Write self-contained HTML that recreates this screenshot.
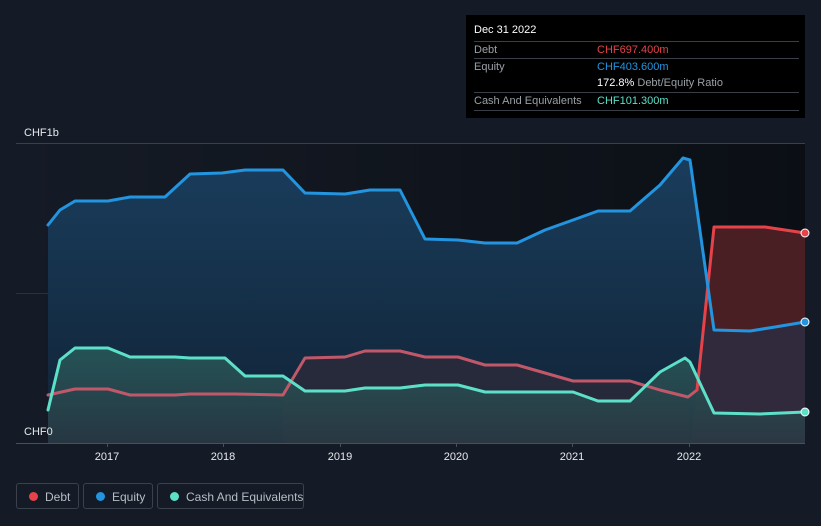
<!DOCTYPE html>
<html><head><style>
body{margin:0;background:#151b26;font-family:"Liberation Sans",sans-serif;}
.wrap{position:relative;width:821px;height:526px;overflow:hidden;background:#151b26;}
.tip{position:absolute;left:466px;top:15px;width:339px;height:103px;background:#000;color:#fff;font-size:11px;}
.tip .r{position:absolute;left:8px;right:6px;border-top:1px solid #3a3f47;height:17px;line-height:17px;color:#9aa0a6;white-space:nowrap;}
.leg{position:absolute;top:483px;height:26px;border:1px solid #3b414b;border-radius:3px;color:#b8bdc4;font-size:12px;line-height:26px;box-sizing:border-box;white-space:nowrap;}
.leg i{position:absolute;top:8px;width:9px;height:9px;border-radius:50%;}
</style></head><body><div class="wrap">
<svg width="821" height="526" style="position:absolute;left:0;top:0">
<defs>
<linearGradient id="bg" x1="0" x2="1" y1="0" y2="0"><stop offset="0" stop-color="#151b26"/><stop offset="1" stop-color="#0b0f15"/></linearGradient>
<linearGradient id="eq" x1="0" x2="0" y1="0" y2="1"><stop offset="0" stop-color="#1a3d5c"/><stop offset="1" stop-color="#102235"/></linearGradient>
<linearGradient id="ca" x1="0" x2="0" y1="0" y2="1"><stop offset="0" stop-color="#285a5a"/><stop offset="1" stop-color="#2a3a44"/></linearGradient>
</defs>
<rect x="16" y="143" width="789" height="300" fill="url(#bg)"/>
<line x1="16" y1="143.5" x2="805" y2="143.5" stroke="#3b4048"/>
<line x1="16" y1="293.5" x2="805" y2="293.5" stroke="#2c3038"/>
<polygon fill="url(#eq)" points="48,443 48,225 60,210 75,201 108,201 130,197 165,197 190,174 222,173 245,170 283,170 305,193 345,194 370,190 400,190 425,239 458,240 485,243 517,243 545,230 573,220 598,211 630,211 660,185 683,158 690,160 714,330 750,331 775,327 805,322 805,443"/>
<polygon fill="#4a1f24" points="703,322 714,227 765,227 805,233 805,322 775,327 750,331 714,330"/>
<polygon fill="#302a3c" points="690,443 697,390 703,322 714,330 750,331 775,327 805,322 805,443"/>
<polygon fill="#2c2a3a" opacity="0.8" points="283,443 283,395 305,358 345,357 365,351 400,351 425,357 458,357 485,365 517,365 545,373 573,381 630,381 660,390 688,397 690,443"/>
<polygon fill="url(#ca)" opacity="0.85" points="48,443 48,410 60,360 75,348 108,348 130,357 175,357 190,358 225,358 245,376 283,376 305,391 345,391 365,388 400,388 425,385 458,385 485,392 573,392 598,401 630,401 660,372 685,358 690,362 714,413 760,414 805,412 805,443"/>
<line x1="16" y1="443.5" x2="805" y2="443.5" stroke="#4a4f57"/>
<g fill="none" stroke-width="3" stroke-linejoin="round" stroke-linecap="round">
<polyline stroke="#c0586a" points="48,395 75,389 108,389 130,395 175,395 190,394 235,394 283,395 305,358 345,357 365,351 400,351 425,357 458,357 485,365 517,365 545,373 573,381 630,381 660,390 688,397 697,390"/>
<polyline stroke="#e5434a" points="697,390 714,227 765,227 805,233"/>
<polyline stroke="#2394df" points="48,225 60,210 75,201 108,201 130,197 165,197 190,174 222,173 245,170 283,170 305,193 345,194 370,190 400,190 425,239 458,240 485,243 517,243 545,230 573,220 598,211 630,211 660,185 683,158 690,160 714,330 750,331 775,327 805,322"/>
<polyline stroke="#5de0c8" points="48,410 60,360 75,348 108,348 130,357 175,357 190,358 225,358 245,376 283,376 305,391 345,391 365,388 400,388 425,385 458,385 485,392 573,392 598,401 630,401 660,372 685,358 690,362 714,413 760,414 805,412"/>
</g>
<circle cx="805" cy="233" r="4" fill="#e5434a" stroke="#fff" stroke-width="1"/>
<circle cx="805" cy="322" r="4" fill="#2394df" stroke="#fff" stroke-width="1"/>
<circle cx="805" cy="412" r="4" fill="#5de0c8" stroke="#fff" stroke-width="1"/>
<g stroke="#4a4f57"><line x1="107.5" y1="443" x2="107.5" y2="447"/><line x1="223.5" y1="443" x2="223.5" y2="447"/><line x1="340.5" y1="443" x2="340.5" y2="447"/><line x1="456.5" y1="443" x2="456.5" y2="447"/><line x1="572.5" y1="443" x2="572.5" y2="447"/><line x1="689.5" y1="443" x2="689.5" y2="447"/></g>
<g fill="#e6e8eb" font-size="11" font-family="Liberation Sans,sans-serif" text-anchor="middle">
<text x="107" y="460">2017</text><text x="223" y="460">2018</text><text x="340" y="460">2019</text><text x="456" y="460">2020</text><text x="572" y="460">2021</text><text x="689" y="460">2022</text>
</g>
<text x="24" y="136" fill="#e6e8eb" font-size="11" font-family="Liberation Sans,sans-serif">CHF1b</text>
<text x="24" y="435" fill="#e6e8eb" font-size="11" font-family="Liberation Sans,sans-serif">CHF0</text>
</svg>
<div class="tip">
<div style="position:absolute;left:8px;top:9px;font-size:11px">Dec 31 2022</div>
<div class="r" style="top:26px">Debt<span style="position:absolute;left:123px;color:#e5434a">CHF697.400m</span></div>
<div class="r" style="top:43px">Equity<span style="position:absolute;left:123px;color:#2394df">CHF403.600m</span></div>
<div class="r" style="top:60px;border-top:none"><span style="position:absolute;left:123px"><b style="color:#fff;font-weight:normal">172.8%</b> Debt/Equity Ratio</span></div>
<div class="r" style="top:77px">Cash And Equivalents<span style="position:absolute;left:123px;color:#5de0c8">CHF101.300m</span></div>
<div style="position:absolute;left:8px;right:6px;top:95px;border-top:1px solid #3a3f47"></div>
</div>
<div class="leg" style="left:16px;width:63px"><i style="left:12px;background:#e5434a"></i><span style="position:absolute;left:28px">Debt</span></div>
<div class="leg" style="left:83px;width:70px"><i style="left:12px;background:#2394df"></i><span style="position:absolute;left:28px">Equity</span></div>
<div class="leg" style="left:157px;width:147px"><i style="left:12px;background:#5de0c8"></i><span style="position:absolute;left:28px">Cash And Equivalents</span></div>
</div></body></html>
